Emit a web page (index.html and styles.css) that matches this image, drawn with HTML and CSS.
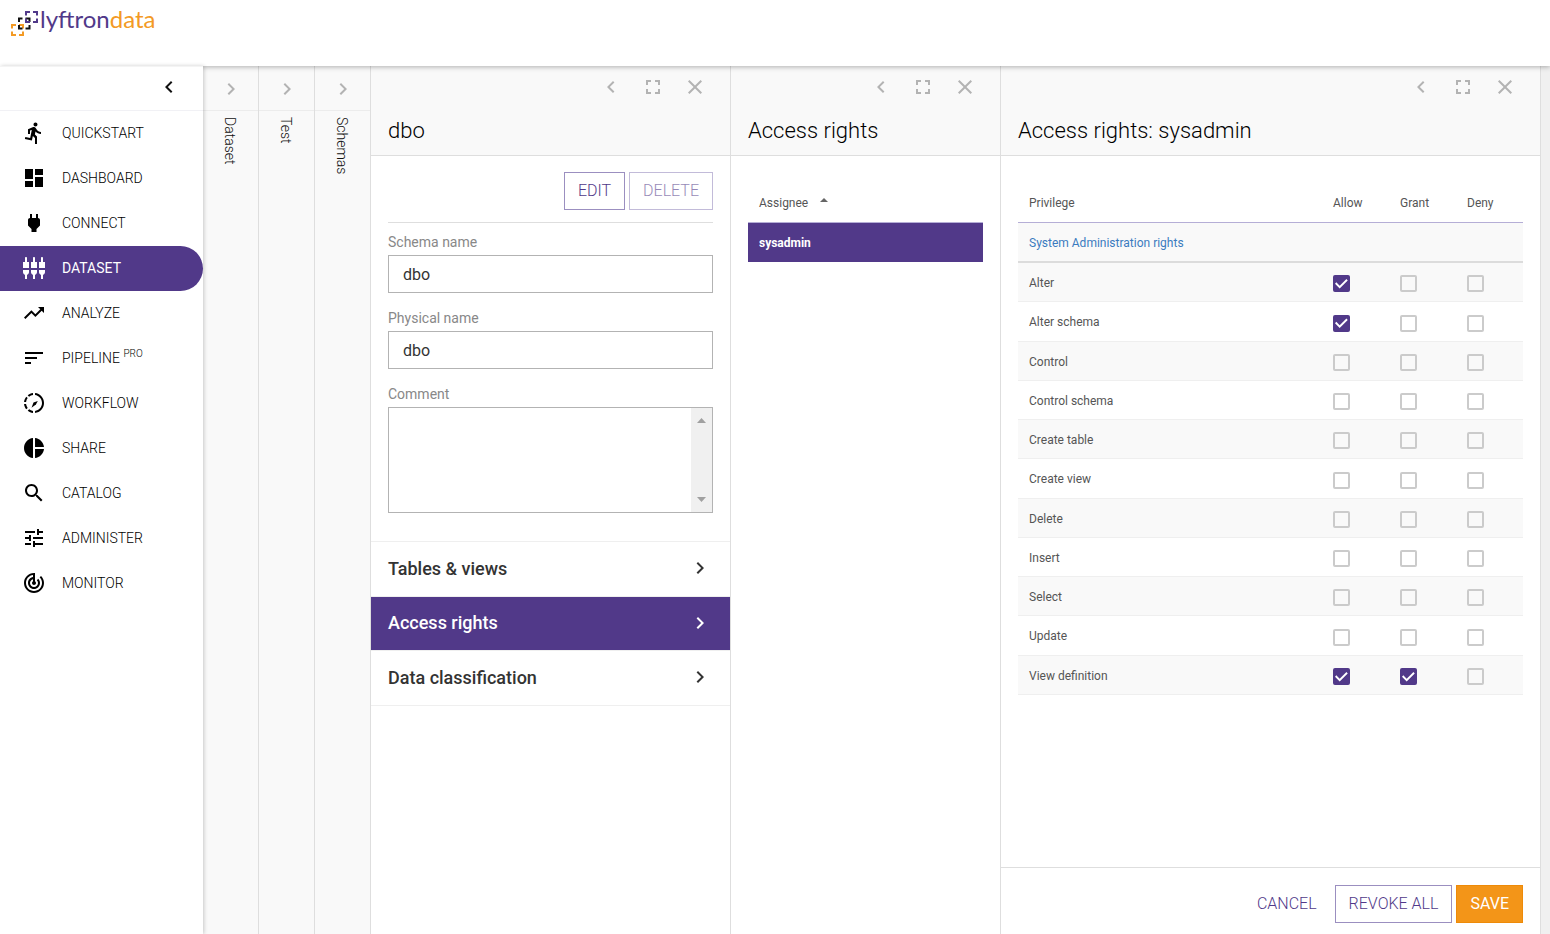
FILE: index.html
```html
<!DOCTYPE html>
<html lang="en">
<head>
<meta charset="utf-8">
<title>Lyftrondata</title>
<link rel="stylesheet" href="styles.css">
</head>
<body>
<svg class="defs" aria-hidden="true">
  <symbol id="left" viewBox="0 0 24 24"><path d="M15.41 7.41L14 6l-6 6 6 6 1.41-1.41L10.83 12z"/></symbol>
  <symbol id="right" viewBox="0 0 24 24"><path d="M10 6L8.59 7.41 13.17 12l-4.58 4.59L10 18l6-6z"/></symbol>
  <symbol id="full" viewBox="0 0 24 24"><path d="M7 14H5v5h5v-2H7v-3zm-2-4h2V7h3V5H5v5zm12 7h-3v2h5v-5h-2v3zM14 5v2h3v3h2V5h-5z"/></symbol>
  <symbol id="close" viewBox="0 0 24 24"><path d="M19 6.41L17.59 5 12 10.59 6.41 5 5 6.41 10.59 12 5 17.59 6.41 19 12 13.41 17.59 19 19 17.59 13.41 12z"/></symbol>
</svg>

<header class="topbar">
  <a class="logo" href="#">
    <svg class="logo-mark" viewBox="0 0 28 28" aria-hidden="true">
      <g fill="none" stroke-width="2">
        <path stroke="#f39a24" d="M6 17H2V20.500M9 17h4V20.500M2 23.500V27H6M9 27h4V23.500"/>
        <path stroke="#111" d="M12.500 10.500H9V14M15.500 10.500h4V14M9 17V20.500H12.500M15.500 20.500h4V17"/>
        <path stroke="#513989" d="M20 4H16V7.500M23 4h4V7.500M16 10.500V14H20M23 14h4V10.500"/>
      </g>
    </svg>
    <span class="logo-text">lyftron<span class="logo-accent">data</span></span>
  </a>
</header>

<div class="layout">
  <aside class="sidebar">
    <div class="sidebar-top"><button class="icon-btn" aria-label="Collapse menu"><svg class="icon"><use href="#left"/></svg></button></div>
    <nav class="nav">
      <a class="nav-item" href="#"><svg class="icon" viewBox="0 0 24 24"><path d="M13.49 5.48c1.1 0 2-.9 2-2s-.9-2-2-2-2 .9-2 2 .9 2 2 2zm-3.600 13.900l1-4.400 2.100 2v6h2v-7.500l-2.100-2 .6-3c1.300 1.500 3.300 2.500 5.500 2.500v-2c-1.900 0-3.500-1-4.300-2.400l-1-1.600c-.4-.6-1-1-1.700-1-.3 0-.5.1-.8.1l-5.200 2.200v4.700h2v-3.400l1.800-.7-1.600 8.100-4.900-1-.4 2 7 1.400z"/></svg>QUICKSTART</a>
      <a class="nav-item" href="#"><svg class="icon" viewBox="0 0 24 24"><path d="M3 13h8V3H3v10zm0 8h8v-6H3v6zm10 0h8V11h-8v10zm0-18v6h8V3h-8z"/></svg>DASHBOARD</a>
      <a class="nav-item" href="#"><svg class="icon" viewBox="0 0 24 24"><path d="M16.010 7L16 3h-2v4h-4V3H8v4h-.01C7 6.990 6 7.990 6 8.990v5.490L9.500 18v3h5v-3l3.500-3.510v-5.500c0-1-1-2-1.990-1.990z"/></svg>CONNECT</a>
      <a class="nav-item nav-item-active" href="#" aria-current="page"><svg class="icon" viewBox="0 0 24 24"><path d="M5 2c0-.55-.45-1-1-1s-1 .45-1 1v4H1v6h6V6H5V2zm4 14c0 1.300.84 2.400 2 2.820V23h2v-4.180c1.160-.41 2-1.510 2-2.820v-2H9v2zm-8 0c0 1.300.84 2.400 2 2.820V23h2v-4.180C6.160 18.400 7 17.300 7 16v-2H1v2zM21 6V2c0-.55-.45-1-1-1s-1 .45-1 1v4h-2v6h6V6h-2zm-8-4c0-.55-.45-1-1-1s-1 .45-1 1v4H9v6h6V6h-2V2zm4 14c0 1.300.84 2.400 2 2.820V23h2v-4.180c1.160-.41 2-1.510 2-2.820v-2h-6v2z"/></svg>DATASET</a>
      <a class="nav-item" href="#"><svg class="icon" viewBox="0 0 24 24"><path d="M16 6l2.290 2.290-4.880 4.880-4-4L2 16.590 3.410 18l6-6 4 4 6.300-6.290L22 12V6z"/></svg>ANALYZE</a>
      <a class="nav-item" href="#"><svg class="icon" viewBox="0 0 24 24"><path d="M3 18h6v-2H3v2zM3 6v2h18V6H3zm0 7h12v-2H3v2z"/></svg><span>PIPELINE <sup class="nav-sup">PRO</sup></span></a>
      <a class="nav-item" href="#"><svg class="icon" viewBox="0 0 24 24"><path d="M11 4.070V2.050c-2.010.2-3.840 1-5.320 2.210L7.100 5.690c1.110-.86 2.440-1.440 3.900-1.620zM5.690 7.100L4.260 5.680C3.050 7.160 2.250 8.990 2.050 11h2.020c.18-1.460.76-2.790 1.620-3.900zM4.070 13H2.050c.2 2.010 1 3.840 2.210 5.320l1.430-1.430c-.86-1.100-1.440-2.430-1.620-3.890zm1.610 6.740C7.160 20.950 9 21.750 11 21.950v-2.020c-1.460-.18-2.790-.76-3.900-1.620l-1.420 1.430zM22 12c0 5.160-3.920 9.420-8.950 9.950v-2.020C16.970 19.410 20 16.050 20 12s-3.030-7.410-6.950-7.930V2.050C18.080 2.580 22 6.840 22 12z"/><path d="M9.500 16.800l2-5.300 4.300-1.400-1.900 3.500z"/></svg>WORKFLOW</a>
      <a class="nav-item" href="#"><svg class="icon" viewBox="0 0 24 24"><path d="M11 2v20c-5.070-.5-9-4.790-9-10s3.930-9.500 9-10zm2.030 0v8.990H22c-.47-4.740-4.240-8.520-8.970-8.990zm0 11.010V22c4.740-.47 8.500-4.250 8.970-8.990h-8.970z"/></svg>SHARE</a>
      <a class="nav-item" href="#"><svg class="icon" viewBox="0 0 24 24"><path d="M15.500 14h-.79l-.28-.27C15.410 12.590 16 11.110 16 9.500 16 5.910 13.090 3 9.500 3S3 5.910 3 9.500 5.910 16 9.500 16c1.610 0 3.090-.59 4.230-1.570l.27.28v.79l5 4.990L20.490 19l-4.990-5zm-6 0C7.010 14 5 11.990 5 9.500S7.010 5 9.500 5 14 7.010 14 9.500 11.990 14 9.500 14z"/></svg>CATALOG</a>
      <a class="nav-item" href="#"><svg class="icon" viewBox="0 0 24 24"><path d="M3 17v2h6v-2H3zM3 5v2h10V5H3zm10 16v-2h8v-2h-8v-2h-2v6h2zM7 9v2H3v2h4v2h2V9H7zm14 4v-2H11v2h10zm-6-4h2V7h4V5h-4V3h-2v6z"/></svg>ADMINISTER</a>
      <a class="nav-item" href="#"><svg class="icon" viewBox="0 0 24 24"><path d="M19.070 4.930l-1.410 1.410C19.100 7.790 20 9.790 20 12c0 4.420-3.580 8-8 8s-8-3.580-8-8c0-4.080 3.050-7.440 7-7.930v2.020C8.160 6.570 6 9.030 6 12c0 3.310 2.690 6 6 6s6-2.690 6-6c0-1.660-.67-3.160-1.760-4.240l-1.410 1.410C15.550 9.900 16 10.900 16 12c0 2.210-1.790 4-4 4s-4-1.790-4-4c0-1.860 1.280-3.410 3-3.860v2.140c-.6.35-1 .98-1 1.720 0 1.100.9 2 2 2s2-.9 2-2c0-.74-.4-1.380-1-1.720V2h-1C6.480 2 2 6.480 2 12s4.480 10 10 10 10-4.480 10-10c0-2.760-1.120-5.260-2.930-7.070z"/></svg>MONITOR</a>
    </nav>
  </aside>

  <main class="panels">
    <section class="strip">
      <div class="strip-top"><button class="icon-btn" aria-label="Expand Dataset"><svg class="icon"><use href="#right"/></svg></button></div>
      <h2 class="strip-title">Dataset</h2>
    </section>
    <section class="strip">
      <div class="strip-top"><button class="icon-btn" aria-label="Expand Test"><svg class="icon"><use href="#right"/></svg></button></div>
      <h2 class="strip-title">Test</h2>
    </section>
    <section class="strip">
      <div class="strip-top"><button class="icon-btn" aria-label="Expand Schemas"><svg class="icon"><use href="#right"/></svg></button></div>
      <h2 class="strip-title">Schemas</h2>
    </section>

    <section class="panel panel-schema">
      <header class="panel-head">
        <div class="panel-tools">
          <button class="icon-btn" aria-label="Collapse"><svg class="icon"><use href="#left"/></svg></button>
          <button class="icon-btn" aria-label="Full screen"><svg class="icon"><use href="#full"/></svg></button>
          <button class="icon-btn" aria-label="Close"><svg class="icon"><use href="#close"/></svg></button>
        </div>
        <h1 class="panel-title">dbo</h1>
      </header>
      <div class="panel-body">
        <div class="actions">
          <button class="btn btn-outline">EDIT</button>
          <button class="btn btn-outline" disabled>DELETE</button>
        </div>
        <form class="form">
          <div class="field"><label for="schema">Schema name</label><input id="schema" class="input" type="text" value="dbo"></div>
          <div class="field"><label for="physical">Physical name</label><input id="physical" class="input" type="text" value="dbo"></div>
          <div class="field"><label for="comment">Comment</label>
            <div class="textbox">
              <textarea id="comment" class="textarea"></textarea>
              <div class="rail" aria-hidden="true">
                <svg class="rail-arrow" viewBox="0 0 9 5"><path d="M4.500 0L9 5H0z"/></svg>
                <svg class="rail-arrow" viewBox="0 0 9 5"><path d="M0 0h9L4.500 5z"/></svg>
              </div>
            </div>
          </div>
        </form>
      </div>
      <nav class="links">
        <a class="link" href="#">Tables &amp; views<svg class="icon"><use href="#right"/></svg></a>
        <a class="link link-active" href="#">Access rights<svg class="icon"><use href="#right"/></svg></a>
        <a class="link" href="#">Data classification<svg class="icon"><use href="#right"/></svg></a>
      </nav>
    </section>

    <section class="panel panel-access">
      <header class="panel-head">
        <div class="panel-tools">
          <button class="icon-btn" aria-label="Collapse"><svg class="icon"><use href="#left"/></svg></button>
          <button class="icon-btn" aria-label="Full screen"><svg class="icon"><use href="#full"/></svg></button>
          <button class="icon-btn" aria-label="Close"><svg class="icon"><use href="#close"/></svg></button>
        </div>
        <h1 class="panel-title">Access rights</h1>
      </header>
      <div class="table-wrap">
        <table class="table">
          <thead><tr><th aria-sort="ascending">Assignee<svg class="sort" viewBox="0 0 8 4" aria-hidden="true"><path d="M4 0l4 4H0z"/></svg></th></tr></thead>
          <tbody><tr class="row-selected"><td>sysadmin</td></tr></tbody>
        </table>
      </div>
    </section>

    <section class="panel panel-rights">
      <header class="panel-head">
        <div class="panel-tools">
          <button class="icon-btn" aria-label="Collapse"><svg class="icon"><use href="#left"/></svg></button>
          <button class="icon-btn" aria-label="Full screen"><svg class="icon"><use href="#full"/></svg></button>
          <button class="icon-btn" aria-label="Close"><svg class="icon"><use href="#close"/></svg></button>
        </div>
        <h1 class="panel-title">Access rights: sysadmin</h1>
      </header>
      <div class="table-wrap">
        <table class="table rights">
          <thead>
            <tr><th>Privilege</th><th class="flag">Allow</th><th class="flag">Grant</th><th class="flag">Deny</th></tr>
          </thead>
          <tbody class="group"><tr><td colspan="4"><a class="group-link" href="#">System Administration rights</a></td></tr></tbody>
          <tbody class="rows">
            <tr><td>Alter</td><td><input type="checkbox" class="check" aria-label="Alter: allow" checked></td><td><input type="checkbox" class="check" aria-label="Alter: grant"></td><td><input type="checkbox" class="check" aria-label="Alter: deny"></td></tr>
            <tr><td>Alter schema</td><td><input type="checkbox" class="check" aria-label="Alter schema: allow" checked></td><td><input type="checkbox" class="check" aria-label="Alter schema: grant"></td><td><input type="checkbox" class="check" aria-label="Alter schema: deny"></td></tr>
            <tr><td>Control</td><td><input type="checkbox" class="check" aria-label="Control: allow"></td><td><input type="checkbox" class="check" aria-label="Control: grant"></td><td><input type="checkbox" class="check" aria-label="Control: deny"></td></tr>
            <tr><td>Control schema</td><td><input type="checkbox" class="check" aria-label="Control schema: allow"></td><td><input type="checkbox" class="check" aria-label="Control schema: grant"></td><td><input type="checkbox" class="check" aria-label="Control schema: deny"></td></tr>
            <tr><td>Create table</td><td><input type="checkbox" class="check" aria-label="Create table: allow"></td><td><input type="checkbox" class="check" aria-label="Create table: grant"></td><td><input type="checkbox" class="check" aria-label="Create table: deny"></td></tr>
            <tr><td>Create view</td><td><input type="checkbox" class="check" aria-label="Create view: allow"></td><td><input type="checkbox" class="check" aria-label="Create view: grant"></td><td><input type="checkbox" class="check" aria-label="Create view: deny"></td></tr>
            <tr><td>Delete</td><td><input type="checkbox" class="check" aria-label="Delete: allow"></td><td><input type="checkbox" class="check" aria-label="Delete: grant"></td><td><input type="checkbox" class="check" aria-label="Delete: deny"></td></tr>
            <tr><td>Insert</td><td><input type="checkbox" class="check" aria-label="Insert: allow"></td><td><input type="checkbox" class="check" aria-label="Insert: grant"></td><td><input type="checkbox" class="check" aria-label="Insert: deny"></td></tr>
            <tr><td>Select</td><td><input type="checkbox" class="check" aria-label="Select: allow"></td><td><input type="checkbox" class="check" aria-label="Select: grant"></td><td><input type="checkbox" class="check" aria-label="Select: deny"></td></tr>
            <tr><td>Update</td><td><input type="checkbox" class="check" aria-label="Update: allow"></td><td><input type="checkbox" class="check" aria-label="Update: grant"></td><td><input type="checkbox" class="check" aria-label="Update: deny"></td></tr>
            <tr><td>View definition</td><td><input type="checkbox" class="check" aria-label="View definition: allow" checked></td><td><input type="checkbox" class="check" aria-label="View definition: grant" checked></td><td><input type="checkbox" class="check" aria-label="View definition: deny"></td></tr>
          </tbody>
        </table>
      </div>
      <footer class="panel-foot">
        <button class="btn btn-text">CANCEL</button>
        <button class="btn btn-outline">REVOKE ALL</button>
        <button class="btn btn-solid">SAVE</button>
      </footer>
    </section>
  </main>
</div>
</body>
</html>
```
FILE: styles.css
```css
* { box-sizing: border-box; }

body {
  margin: 0;
  min-height: 100vh;
  display: flex;
  flex-direction: column;
  font-family: Roboto, "Liberation Sans", sans-serif;
  font-size: 14px;
  color: #111;
  background: #fff;
}

.defs { display: none; }

.icon {
  display: block;
  flex: none;
  width: 24px;
  height: 24px;
  fill: currentColor;
}

.icon-btn {
  padding: 0;
  border: 0;
  background: none;
  color: inherit;
  cursor: pointer;
}

/* Top bar */
.topbar {
  position: relative;
  z-index: 1;
  height: 66px;
  padding: 8px 10px;
  background: #fff;
  box-shadow: 0 1px 5px rgba(0, 0, 0, .3);
}

.logo {
  display: inline-flex;
  align-items: flex-start;
  gap: 2px;
  text-decoration: none;
}

.logo-mark { width: 28px; height: 28px; }

.logo-text {
  font-family: Lato, sans-serif;
  font-size: 24px;
  line-height: 22px;
  color: #513989;
}

.logo-accent { color: #f39a24; }

.layout { flex: 1; display: flex; }

/* Sidebar */
.sidebar {
  position: relative;
  z-index: 2;
  flex: none;
  width: 203px;
  background: #fff;
  box-shadow: 1px 0 4px rgba(0, 0, 0, .2);
}

.sidebar-top {
  display: flex;
  justify-content: flex-end;
  align-items: center;
  height: 45px;
  padding: 0 22px 4px 0;
  border-top: 1px solid #f4f4f4;
  border-bottom: 1px solid #f1f1f5;
}

.nav-item {
  display: flex;
  align-items: center;
  gap: 16px;
  height: 45px;
  padding: 0 0 2px 22px;
  border-radius: 0 23px 23px 0;
  font-weight: 300;
  color: #000;
  text-decoration: none;
}

.nav-item-active { background: #513989; font-weight: 400; color: #fff; }

.nav-sup { font-size: 10px; line-height: 0; }

/* Panels */
.panels { flex: 1; display: flex; background: #f0f0f0; }

.strip {
  flex: none;
  width: 56px;
  border-right: 1px solid #dedede;
  background: #f9f9f9;
}

.strip-top {
  display: flex;
  justify-content: center;
  align-items: center;
  height: 45px;
  padding-top: 2px;
  border-bottom: 1px solid #ececec;
  color: #b3b3b3;
}

.strip-title {
  width: 20px;
  margin: 6px auto 0 17px;
  writing-mode: vertical-rl;
  font-size: 14px;
  line-height: 20px;
  font-weight: 300;
}

.panel {
  display: flex;
  flex-direction: column;
  flex: none;
  border-right: 1px solid #dedede;
  background: #fff;
}

.panel-schema { width: 360px; }
.panel-access { width: 270px; }
.panel-rights { width: 540px; }

.panel-head {
  height: 90px;
  padding: 9px 17px 0;
  border-bottom: 1px solid #dedede;
  background: #f9f9f9;
}

.panel-tools {
  display: flex;
  justify-content: flex-end;
  gap: 18px;
  padding-right: 6px;
  color: #b3b3b3;
}

.panel-title {
  margin: 17px 0 0;
  font-size: 22px;
  line-height: 30px;
  font-weight: 300;
  color: #000;
}

.panel-body { padding: 16px 17px 28px; }

.actions {
  display: flex;
  justify-content: flex-end;
  gap: 4px;
  padding-bottom: 12px;
  border-bottom: 1px solid #dedede;
}

.btn {
  height: 38px;
  padding: 0 13px 2px;
  border: 1px solid transparent;
  background: #fff;
  font-family: inherit;
  font-size: 16px;
  font-weight: 300;
  color: #513989;
}

.btn-outline { border-color: #9b8fc0; }
.btn:disabled { opacity: .6; }
.btn-solid { background: #f39518; border-color: #ee8a08; font-weight: 400; color: #fff; }

.form {
  display: flex;
  flex-direction: column;
  gap: 15px;
  padding-top: 9px;
}

.field {
  display: flex;
  flex-direction: column;
  gap: 3px;
  line-height: 20px;
  color: #888;
}

.input {
  width: 100%;
  height: 38px;
  padding: 0 14px;
  border: 1px solid #b3b3b3;
  background: #fff;
  font-family: inherit;
  font-size: 16px;
  color: #333;
}

.textbox {
  display: flex;
  height: 106px;
  border: 1px solid #b3b3b3;
}

.textarea {
  flex: 1;
  min-width: 0;
  padding: 8px 14px;
  border: 0;
  resize: none;
  overflow: hidden;
  font-family: inherit;
  font-size: 16px;
}

.rail {
  display: flex;
  flex-direction: column;
  justify-content: space-between;
  align-items: center;
  width: 21px;
  padding: 10px 0;
  background: #f0f0f0;
}

.rail-arrow { width: 9px; height: 5px; fill: #a0a0a0; }

.links { border-top: 1px solid #efefef; }

.link {
  display: flex;
  justify-content: space-between;
  align-items: center;
  height: 55px;
  padding: 0 18px 2px 17px;
  border-bottom: 1px solid #efefef;
  font-size: 18px;
  font-weight: 500;
  color: #333;
  text-decoration: none;
}

.link-active {
  height: 54px;
  background: #513989;
  background-clip: padding-box;
  color: #fff;
}

/* Tables */
.table-wrap { flex: 1; padding: 27px 17px; }

.table {
  width: 100%;
  border-spacing: 0;
  table-layout: fixed;
  font-size: 12px;
  color: #555;
}

.table th,
.table td {
  height: 39px;
  padding: 1px 11px 0;
  text-align: left;
  font-weight: 400;
  vertical-align: middle;
}

.table th {
  height: 40px;
  border-bottom: 1px solid #b5aed6;
}

.sort {
  width: 8px;
  height: 4px;
  margin-left: 12px;
  vertical-align: 5px;
  fill: #666;
}

.table .row-selected td {
  background: #513989;
  font-weight: 700;
  color: #fff;
}

.flag { width: 67px; }

.rights .group td {
  height: 40px;
  border-bottom: 2px solid #dcdcdc;
  background: #f9f9f9;
}

.group-link { color: #3b7bbf; text-decoration: none; }

.rows td { border-bottom: 1px solid #efefef; }
.rows tr:nth-child(odd) { background: #f9f9f9; }
.rights .rows tr:nth-child(4n+2) td { height: 40px; }

.check {
  appearance: none;
  display: block;
  width: 17px;
  height: 17px;
  margin: 2px 0 0;
  border: 2px solid #cbcbcb;
  border-radius: 2px;
}

.check:checked { border-color: #513989; background: #513989; }

.check:checked::before {
  content: "";
  display: block;
  width: 13px;
  height: 13px;
  background: #fff;
  clip-path: polygon(0 51%, 10% 41%, 36% 68%, 88% 15%, 98% 26%, 36% 88%);
}

.panel-foot {
  display: flex;
  justify-content: flex-end;
  gap: 4px;
  padding: 17px 17px 11px;
  border-top: 1px solid #dedede;
}
```
